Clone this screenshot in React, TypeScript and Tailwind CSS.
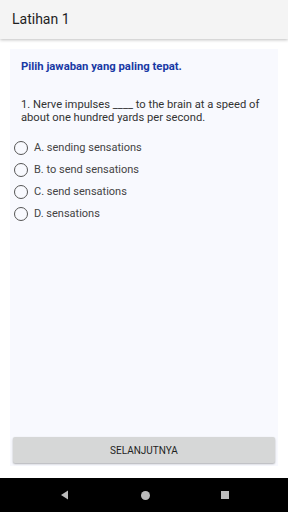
const OPTIONS = ['A. sending sensations', 'B. to send sensations', 'C. send sensations', 'D. sensations']

export default function App() {
  return (
    <div className="relative flex h-[512px] w-[288px] flex-col overflow-hidden bg-white font-['Roboto',sans-serif]">
      {/* App bar */}
      <div className="z-10 flex h-[39px] shrink-0 items-center bg-[#f4f4f4] pl-3 shadow-[0_1px_3px_rgba(0,0,0,0.25)]">
        <span className="text-[14px] text-[#1f1f1f]">Latihan 1</span>
      </div>

      {/* Content */}
      <div className="mx-[10px] mt-[10px] flex flex-1 flex-col bg-[#f8f9fe]">
        <div className="px-[11px] pt-[11px] text-[11.3px] font-bold leading-[14px] text-[#1939a5]">Pilih jawaban yang paling tepat.</div>
        <div className="mt-[24px] pl-[11px] pr-[6px] text-[11.2px] leading-[13px] text-[#333]">
          1. Nerve impulses ____ to the brain at a speed of about one hundred yards per second.
        </div>
        <div className="mt-[13px] flex flex-col pl-[4px]">
          {OPTIONS.map((o) => (
            <div key={o} className="flex h-[22px] items-center gap-[6px]">
              <span className="h-[14px] w-[14px] rounded-full border-[1.5px] border-[#555]" />
              <span className="text-[11px] text-[#444]">{o}</span>
            </div>
          ))}
        </div>
        <div className="flex-1" />
        <div className="mx-[3px] mb-[3px] flex h-[26px] items-center justify-center rounded-[2px] bg-[#d6d7d7] shadow-[0_1px_2px_rgba(0,0,0,0.3)]">
          <span className="text-[10px] text-[#1f1f1f]">SELANJUTNYA</span>
        </div>
      </div>
      <div className="h-[12px] shrink-0" />

      {/* Nav bar */}
      <div className="flex h-[34px] shrink-0 items-center justify-center gap-[71px] bg-black">
        <svg width="10" height="10" viewBox="0 0 10 10">
          <polygon points="8,0.5 8,9.5 1,5" fill="#bbb" />
        </svg>
        <span className="h-[9px] w-[9px] rounded-full bg-[#bbb]" />
        <span className="h-[8px] w-[8px] bg-[#bbb]" />
      </div>
    </div>
  )
}
